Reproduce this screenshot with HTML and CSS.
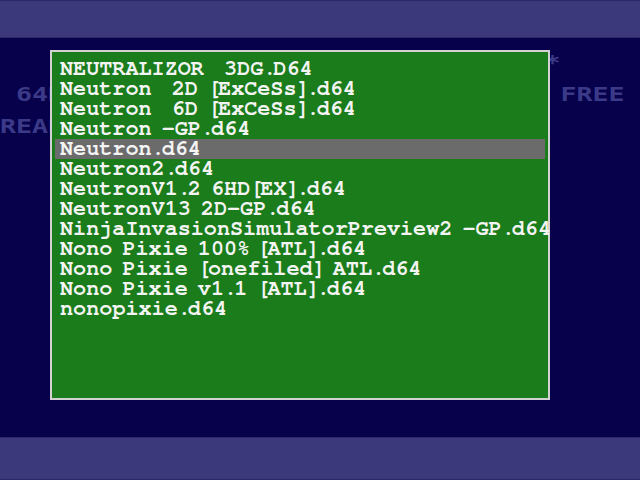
FILE: index.html
```html
<!DOCTYPE html>
<html>
<head>
<meta charset="utf-8">
<link rel="stylesheet" href="styles.css">
</head>
<body>
<div class="frame">
  <div class="bar bar-top"></div>
  <div class="screen">
    <pre class="c64">
    **** COMMODORE 64 BASIC V2 ****

 64K RAM SYSTEM  38911 BASIC BYTES FREE

READY.</pre>
    <div class="dialog">
      <ul class="files">
        <li>NEUTRALIZOR  3DG<span class="p">.</span>D64</li>
        <li>Neutron  2D <span class="p">[</span>ExCeSs<span class="p">].</span>d64</li>
        <li>Neutron  6D <span class="p">[</span>ExCeSs<span class="p">].</span>d64</li>
        <li>Neutron -GP<span class="p">.</span>d64</li>
        <li class="sel">Neutron<span class="p">.</span>d64</li>
        <li>Neutron2<span class="p">.</span>d64</li>
        <li>NeutronV1<span class="p">.</span>2 6HD<span class="p">[</span>EX<span class="p">].</span>d64</li>
        <li>NeutronV13 2D-GP<span class="p">.</span>d64</li>
        <li>NinjaInvasionSimulatorPreview2 -GP<span class="p">.</span>d64</li>
        <li>Nono Pixie 100<span class="p">%</span> <span class="p">[</span>ATL<span class="p">].</span>d64</li>
        <li>Nono Pixie <span class="p">[</span>onefiled<span class="p">]</span> ATL<span class="p">.</span>d64</li>
        <li>Nono Pixie v1<span class="p">.</span>1 <span class="p">[</span>ATL<span class="p">].</span>d64</li>
        <li>nonopixie<span class="p">.</span>d64</li>
      </ul>
    </div>
  </div>
  <div class="bar bar-bottom"></div>
</div>
</body>
</html>
```
FILE: styles.css
```css
html, body {
  margin: 0;
  padding: 0;
  background: #07004b;
  overflow: hidden;
}
.frame {
  width: 640px;
  height: 480px;
  display: flex;
  flex-direction: column;
}
.bar {
  background: #3c387c;
  box-sizing: border-box;
  border-top: 1px solid #2b2868;
  border-bottom: 1px solid #2b2868;
}
.bar-top {
  height: 38px;
}
.bar-bottom {
  height: 43px;
}
.screen {
  flex: 1;
  position: relative;
  background: #07004b;
  overflow: hidden;
}
.c64 {
  margin: 16px 0 0 0;
  font-family: "DejaVu Sans Mono", monospace;
  font-weight: bold;
  font-size: 19px;
  line-height: 16px;
  color: #3b3a88;
  transform: scaleX(1.4);
  transform-origin: 0 0;
  white-space: pre;
}
.dialog {
  position: absolute;
  left: 50px;
  top: 12px;
  width: 500px;
  height: 350px;
  box-sizing: border-box;
  border: 2px solid #d2d2d2;
  background: #1a7c1a;
  padding: 7px 3px 0 3px;
}
.files {
  list-style: none;
  margin: 0;
  padding: 0;
  font-family: "Nimbus Mono PS", "Nimbus Mono L", "FreeMono", "Courier 10 Pitch", "Liberation Mono", monospace;
  font-weight: bold;
  font-size: 21.8px;
  line-height: 20px;
  word-spacing: -3px;
  color: #f4f4f4;
}
.files li {
  height: 20px;
  padding-left: 5px;
  white-space: pre;
}
.files .p {
  letter-spacing: -3px;
}
.files li.sel {
  background: #6b6b6b;
}
```
